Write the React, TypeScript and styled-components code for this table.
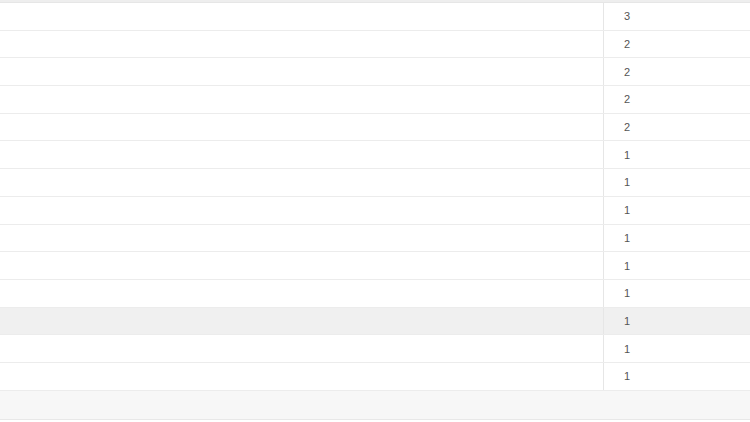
import React from "react";
import styled, { createGlobalStyle } from "styled-components";

const GlobalStyle = createGlobalStyle`
  html, body {
    margin: 0;
    padding: 0;
    background: #ffffff;
  }
  body {
    font-family: "Liberation Sans", Arial, sans-serif;
    overflow: hidden;
  }
`;

const counts = [3, 2, 2, 2, 2, 1, 1, 1, 1, 1, 1, 1, 1, 1];
const activeRow = 11;

function App() {
  return (
    <>
      <GlobalStyle />
      <Table>
        <HeaderBand />
        {counts.map((n, i) => (
          <Row key={i} active={i === activeRow}>
            <NameCell />
            <CountCell>{n}</CountCell>
          </Row>
        ))}
        <Footer />
      </Table>
    </>
  );
}

export default App;

const Table = styled.div`
  width: 750px;
  height: 422px;
  display: flex;
  flex-direction: column;
  background: #ffffff;
`;

const HeaderBand = styled.div`
  height: 2px;
  background: #eeeeee;
  border-bottom: 1px solid #e6e6e6;
`;

const Row = styled.div<{ active: boolean }>`
  height: 27.7px;
  box-sizing: border-box;
  display: grid;
  grid-template-columns: 604px 1fr;
  border-bottom: 1px solid #ececec;
  background: ${(p) => (p.active ? "#f0f0f0" : "#ffffff")};
`;

const NameCell = styled.div`
  border-right: 1px solid #e6e6e6;
`;

const CountCell = styled.div`
  display: flex;
  align-items: center;
  padding-left: 20px;
  font-size: 11px;
  color: #555555;
`;

const Footer = styled.div`
  height: 28px;
  background: #f7f7f7;
  border-bottom: 1px solid #e8e8e8;
`;
